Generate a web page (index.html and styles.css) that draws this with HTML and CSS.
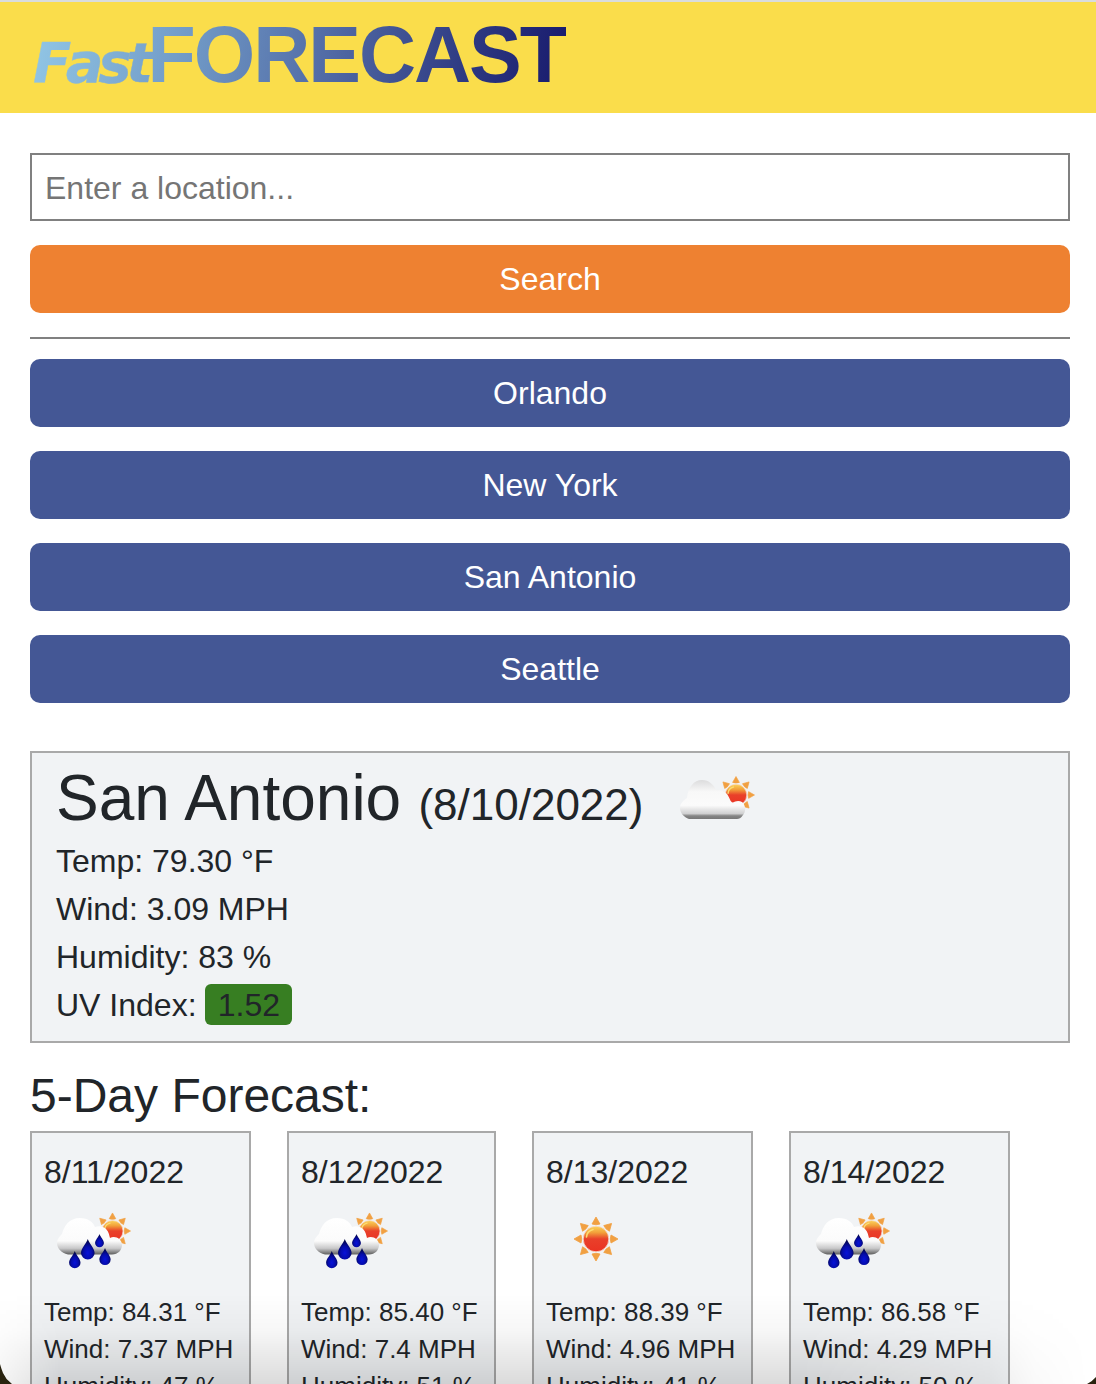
FILE: index.html
```html
<!DOCTYPE html>
<html lang="en">
<head>
<meta charset="utf-8">
<title>FastForecast</title>
<link rel="stylesheet" href="styles.css">
</head>
<body>
<svg class="defs" aria-hidden="true">
  <defs>
    <linearGradient id="sunFill" x1="0" y1="0" x2="0" y2="1">
      <stop offset="0" stop-color="#fbd45c"/><stop offset=".25" stop-color="#f2a03a"/><stop offset=".5" stop-color="#e9402a"/><stop offset="1" stop-color="#ea3323"/>
    </linearGradient>
    <linearGradient id="cloudFill" gradientUnits="userSpaceOnUse" x1="0" y1="27" x2="0" y2="66">
      <stop offset="0" stop-color="#dcdcdd"/><stop offset=".3" stop-color="#f8f8f8"/><stop offset=".65" stop-color="#fbfbfb"/><stop offset=".86" stop-color="#d0d0d1"/><stop offset=".92" stop-color="#858585"/><stop offset="1" stop-color="#777"/>
    </linearGradient>
    <linearGradient id="rainCloud" gradientUnits="userSpaceOnUse" x1="0" y1="28" x2="0" y2="65">
      <stop offset="0" stop-color="#fff"/><stop offset=".62" stop-color="#fbfbfb"/><stop offset=".82" stop-color="#c8c8c9"/><stop offset="1" stop-color="#555"/>
    </linearGradient>
    <radialGradient id="dropFill" cx=".5" cy=".68" r=".6">
      <stop offset="0" stop-color="#0712d8"/><stop offset=".5" stop-color="#050cae"/><stop offset="1" stop-color="#020548"/>
    </radialGradient>
    <path id="drop" d="M0 0C1.5 5 6.8 9 6.8 14A6.8 6.5 0 0 1-6.8 14C-6.8 9-1.5 5 0 0Z" fill="url(#dropFill)"/>
    <path id="ray" d="M0-22L4-15Q0-13.5-4-15Z" fill="#f1a042" stroke="#f1a042" stroke-width=".8" stroke-linejoin="round"/>
    <g id="sun">
      <use href="#ray"/><use href="#ray" transform="rotate(45)"/><use href="#ray" transform="rotate(90)"/><use href="#ray" transform="rotate(135)"/>
      <use href="#ray" transform="rotate(180)"/><use href="#ray" transform="rotate(225)"/><use href="#ray" transform="rotate(270)"/><use href="#ray" transform="rotate(315)"/>
      <circle r="12.8" fill="url(#sunFill)" stroke="#f9d9c8" stroke-width=".8"/>
      <path d="M-9.5-2Q-9-8-3-9.5" fill="none" stroke="#fbdc70" stroke-width="1.6" stroke-linecap="round"/>
    </g>
    <symbol id="cloudy" viewBox="0 0 100 100">
      <use href="#sun" transform="translate(68 42) scale(.84)"/>
      <path d="M21 66C16 64 12 60 12 55C12 50 16 47 19 45C20 34 26 27 34 27C41 27 46 32 48 37C52 36 56 37 59 41C62 45 62 49 65 49.5C67 48 71 47 74 49C78 52 78 59 75 62C73 65 71 66 69 66Z" fill="url(#cloudFill)"/>
    </symbol>
    <symbol id="rain" viewBox="0 0 100 100">
      <use href="#sun" transform="translate(68.5 41) scale(.82)"/>
      <path d="M24 64.500C17 63 13 58 13 53C13 49 16 46 18 44C20 36 25 28 36 28C44 28 49 32 51 37C55 35.500 59 36 62 39C65 42 65 45 66 48C71 45 78 49 78 55C78 60 74 64.500 68 64.500Z" fill="url(#rainCloud)"/>
      <use href="#drop" transform="translate(55.500 44) scale(.65)"/>
      <use href="#drop" transform="translate(30.800 61) scale(.84)"/>
      <use href="#drop" transform="translate(61 58) scale(.83)"/>
      <use href="#drop" transform="translate(43.800 49)"/>
    </symbol>
    <symbol id="clear" viewBox="0 0 100 100"><use href="#sun" transform="translate(50 49)"/></symbol>
  </defs>
</svg>
<header class="header"><h1 class="logo"><span class="logo-fast">Fast</span><span class="logo-forecast">FORECAST</span></h1></header>
<main class="main">
  <form class="search">
    <input class="search-input" type="text" placeholder="Enter a location...">
    <button class="btn btn-search" type="button">Search</button>
  </form>
  <nav class="history">
    <button class="btn">Orlando</button>
    <button class="btn">New York</button>
    <button class="btn">San Antonio</button>
    <button class="btn">Seattle</button>
  </nav>
  <section class="current">
    <div class="current-head">
      <h2 class="city">San Antonio<span class="city-date"> (8/10/2022)</span></h2>
      <svg class="current-icon"><use href="#cloudy"/></svg>
    </div>
    <p>Temp: 79.30 °F</p>
    <p>Wind: 3.09 MPH</p>
    <p>Humidity: 83 %</p>
    <p>UV Index: <span class="uv">1.52</span></p>
  </section>
  <h3 class="forecast-title">5-Day Forecast:</h3>
  <section class="forecast">
    <article class="card"><h4>8/11/2022</h4><svg class="icon"><use href="#rain"/></svg><p>Temp: 84.31 °F</p><p>Wind: 7.37 MPH</p><p>Humidity: 47 %</p></article>
    <article class="card card-narrow"><h4>8/12/2022</h4><svg class="icon"><use href="#rain"/></svg><p>Temp: 85.40 °F</p><p>Wind: 7.4 MPH</p><p>Humidity: 51 %</p></article>
    <article class="card"><h4>8/13/2022</h4><svg class="icon"><use href="#clear"/></svg><p>Temp: 88.39 °F</p><p>Wind: 4.96 MPH</p><p>Humidity: 41 %</p></article>
    <article class="card"><h4>8/14/2022</h4><svg class="icon"><use href="#rain"/></svg><p>Temp: 86.58 °F</p><p>Wind: 4.29 MPH</p><p>Humidity: 50 %</p></article>
  </section>
</main>
<div class="shade"></div>
<div class="corner corner-left"></div>
<div class="corner corner-right"></div>
</body>
</html>
```
FILE: styles.css
```css
* { box-sizing: border-box; }
html { overflow: hidden; }
body {
  position: relative;
  margin: 0;
  height: 1384px;
  overflow: hidden;
  background: #fff;
  color: #212529;
  font: 32px/48px "Liberation Sans", Arial, sans-serif;
}
h1, h2, h3, h4, p { margin: 0; font-weight: 400; }
.defs { position: absolute; width: 0; height: 0; }
.header {
  height: 113px;
  padding: 7px 33px 0;
  border-top: 2px solid #d9dcdd;
  background: #fadd4b;
}
.logo {
  width: fit-content;
  height: 96px;
  line-height: 92px;
  white-space: nowrap;
  font-weight: 700;
  color: transparent;
  background: linear-gradient(100deg, #92c7e6 0%, #7099c6 30%, #5069a4 56%, #2c3780 82%, #17196c 100%);
  -webkit-background-clip: text;
  background-clip: text;
}
.logo-fast {
  font-family: "DejaVu Sans", sans-serif;
  font-style: italic;
  font-size: 56px;
  letter-spacing: -5.4px;
  font-kerning: none;
  -webkit-text-stroke: .4px transparent;
}
.logo-forecast { font-size: 79px; letter-spacing: -2px; }
.main { padding: 40px 26px 0 30px; }
.search {
  display: flex;
  flex-direction: column;
  gap: 24px;
  padding-bottom: 24px;
  border-bottom: 2px solid #808080;
}
.search-input {
  height: 68px;
  padding: 2px 13px 0;
  border: 2px solid #808080;
  border-radius: 0;
  background: #fff;
  font: inherit;
}
.search-input::placeholder { color: #757575; }
.btn {
  height: 68px;
  padding: 0;
  border: 0;
  border-radius: 10px;
  background: #445795;
  color: #fff;
  font: inherit;
}
.btn-search { background: #ee8131; }
.history {
  display: flex;
  flex-direction: column;
  gap: 24px;
  padding: 20px 0 48px;
}
.current {
  height: 292px;
  padding: 0 24px;
  border: 2px solid #a9a9a9;
  background: #f1f3f5;
}
.current-head { display: flex; height: 84px; }
.city { width: 591px; flex: none; font-size: 64px; line-height: 90px; white-space: nowrap; }
.city-date { margin-left: 5px; font-size: 44px; }
.current-icon { width: 100px; height: 100px; margin-left: 21px; flex: none; }
.uv {
  display: inline-block;
  width: 87px;
  height: 41px;
  line-height: 43px;
  text-align: center;
  border-radius: 6px;
  background: #377e22;
}
.forecast-title { padding-top: 24px; font-size: 48px; line-height: 58px; height: 88px; }
.forecast { display: flex; gap: 36px; }
.card {
  width: 221px;
  height: 330px;
  padding: 15px 0 0 12px;
  border: 2px solid #a9a9a9;
  background: #f1f3f5;
  font-size: 26px;
  line-height: 37px;
  white-space: nowrap;
}
.card-narrow { width: 209px; }
.card h4 { font-size: 32px; line-height: 48px; }
.icon { display: block; width: 100px; height: 100px; margin: -6px 0 4px; }
.shade {
  position: absolute;
  left: 0;
  right: 0;
  bottom: 0;
  height: 90px;
  background: linear-gradient(transparent, rgba(0, 0, 0, .03) 40%, rgba(0, 0, 0, .14));
  -webkit-mask-image: linear-gradient(90deg, rgba(0, 0, 0, .3), #000 60px, #000 800px, rgba(0, 0, 0, .5) 990px, rgba(0, 0, 0, .15) 1035px, transparent 1090px);
  mask-image: linear-gradient(90deg, rgba(0, 0, 0, .3), #000 60px, #000 800px, rgba(0, 0, 0, .5) 990px, rgba(0, 0, 0, .15) 1035px, transparent 1090px);
}
.corner { position: absolute; bottom: 0; background: #29230f; }
.corner-left { left: 0; width: 12px; height: 20px; clip-path: polygon(0 0, 10% 20%, 25% 45%, 55% 75%, 100% 100%, 0 100%); }
.corner-right { right: 0; width: 9px; height: 7px; clip-path: polygon(100% 0, 50% 60%, 0 100%, 100% 100%); }
```
